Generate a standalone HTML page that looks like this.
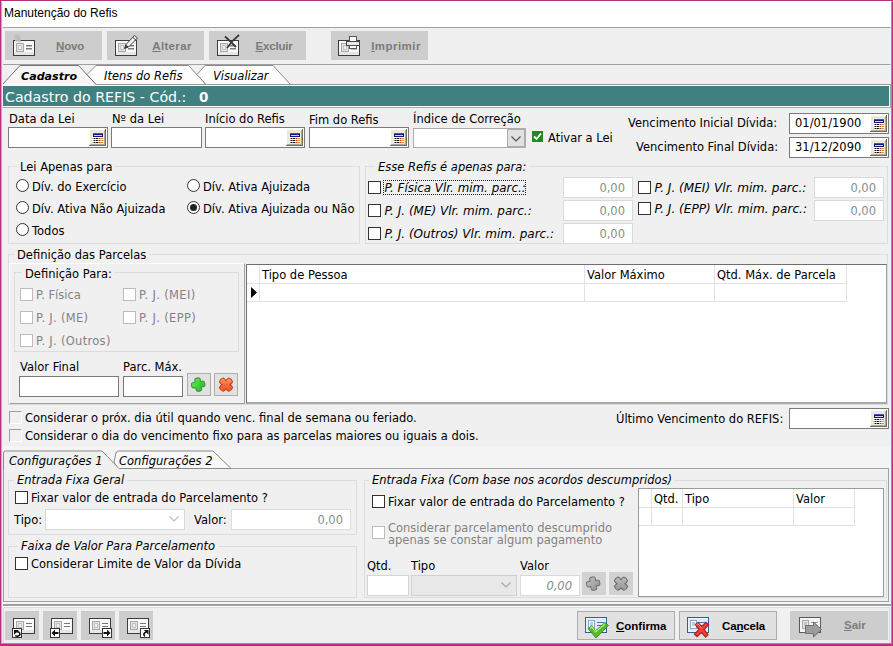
<!DOCTYPE html>
<html lang="pt-BR"><head><meta charset="utf-8"><title>Manutenção do Refis</title><style>
html,body{margin:0;padding:0;background:#fff;}
#w{position:relative;width:893px;height:646px;overflow:hidden;font-family:"DejaVu Sans","Liberation Sans",sans-serif;font-size:11.5px;color:#000;line-height:15px;}
#w div,#w svg.a,#w svg.ic{position:absolute;box-sizing:border-box;}
.t{white-space:nowrap;}
.inp{background:#fff;border:1px solid #7a7a7a;}
.dinp{background:#fff;border:1px solid #d9d9d9;}
.v{position:absolute;left:5px;top:2px;white-space:nowrap;}
.vr{position:absolute;right:7px;top:2.5px;color:#8c8c8c;white-space:nowrap;}
.cb{background:#fff;border:1px solid #333;}
.cb.dis{border-color:#bcbcbc;background:#fff;}
.rb{background:#fff;border:1px solid #333;border-radius:50%;}
.rb i{position:absolute;left:2px;top:2px;width:7px;height:7px;border-radius:50%;background:#222;}
.gb{border:1px solid #dcdcdc;}
.combo{background:#fff;border:1px solid #adadad;}
.cbtn{right:0;top:0;width:18px;height:18px;background:#e1e1e1;border:1px solid #adadad;}
.cbtn svg,.cbtn2 svg{position:absolute;left:2px;top:5px;}
.cbtn2{right:0;top:0;width:18px;height:18px;background:#fff;}
.bl{position:absolute;top:8.5px;font:bold 11.5px "Liberation Sans",sans-serif;color:#7a7a7a;white-space:nowrap;}
.gh{position:absolute;left:2px;top:2.5px;white-space:nowrap;}
</style></head><body><div id="w">
<div class="a" style="left:0px;top:0px;width:893px;height:646px;background:#fff;"></div>
<div class="t" style="left:4px;top:6px;font:12px 'Liberation Sans',sans-serif;color:#000;">Manutenção do Refis</div>
<div class="a" style="left:2px;top:27px;width:889px;height:617px;background:#f0f0f0;"></div>
<div class="a" style="left:2px;top:27px;width:889px;height:38px;background:#f0f0f0;border:1px solid #a0a0a0;border-left-color:#fff;border-right-color:#f0f0f0;"></div>
<div class="a" style="left:5px;top:31px;width:97px;height:29px;background:#cdcdcd;"><svg class="ic" width="30" height="26" viewBox="0 0 30 26" style="left:6px;top:2px"><rect x="2.5" y="7.5" width="21" height="15" fill="#fafafa" stroke="#3c3c3c"/><rect x="3" y="19" width="20" height="3" fill="#e6e6e6"/><rect x="5.5" y="10.5" width="7" height="8" fill="#e4e4e4" stroke="#a8a8a8"/><rect x="7" y="12" width="4" height="5" fill="#c4c4c4"/><rect x="8" y="13" width="2" height="3" fill="#eee"/><rect x="15" y="12" width="6" height="1.5" fill="#7c7c7c"/><rect x="15" y="15" width="6" height="1.5" fill="#7c7c7c"/><path d="M3.5 1 L6 5 L6.5 0.5 L9 5.5 L10.5 9.5 L7 9.5 L4.5 8.5 L2.5 4Z" fill="#c4c4c4" opacity="0.9"/><path d="M4.5 1.5 L7 7 M7 1 L9 6.5" stroke="#b0b0b0" stroke-width="0.8" fill="none"/></svg><span class="bl" style="left:25px;width:80px;text-align:center;letter-spacing:-0.2px"><u>N</u>ovo</span></div>
<div class="a" style="left:107px;top:31px;width:97px;height:29px;background:#cdcdcd;"><svg class="ic" width="30" height="26" viewBox="0 0 30 26" style="left:6px;top:2px"><rect x="2.5" y="7.5" width="21" height="15" fill="#fafafa" stroke="#3c3c3c"/><rect x="3" y="19" width="20" height="3" fill="#e6e6e6"/><rect x="5.5" y="10.5" width="7" height="8" fill="#e4e4e4" stroke="#a8a8a8"/><rect x="7" y="12" width="4" height="5" fill="#c4c4c4"/><rect x="8" y="13" width="2" height="3" fill="#eee"/><rect x="15" y="12" width="6" height="1.5" fill="#7c7c7c"/><rect x="15" y="15" width="6" height="1.5" fill="#7c7c7c"/><path d="M11.5 15.5 L13 11.5 L21.5 2.5 L24.5 5 L15.5 14 Z" fill="#f4f4f4" stroke="#444" stroke-width="1"/><path d="M11.5 15.5 L13 11.5 L15.5 14Z" fill="#333"/><path d="M20 4.5 L23 7" stroke="#444" fill="none"/></svg><span class="bl" style="left:25px;width:80px;text-align:center;letter-spacing:0.35px"><u>A</u>lterar</span></div>
<div class="a" style="left:209px;top:31px;width:97px;height:29px;background:#cdcdcd;"><svg class="ic" width="30" height="26" viewBox="0 0 30 26" style="left:6px;top:2px"><rect x="2.5" y="7.5" width="21" height="15" fill="#fafafa" stroke="#3c3c3c"/><rect x="3" y="19" width="20" height="3" fill="#e6e6e6"/><rect x="5.5" y="10.5" width="7" height="8" fill="#e4e4e4" stroke="#a8a8a8"/><rect x="7" y="12" width="4" height="5" fill="#c4c4c4"/><rect x="8" y="13" width="2" height="3" fill="#eee"/><rect x="15" y="12" width="6" height="1.5" fill="#7c7c7c"/><rect x="15" y="15" width="6" height="1.5" fill="#7c7c7c"/><path d="M10 3.5 L16 9 L21 14 M24 2 L18 7.5 L12 15" stroke="#3a3a3a" stroke-width="1.8" fill="none"/></svg><span class="bl" style="left:25px;width:80px;text-align:center;letter-spacing:-0.2px"><u>E</u>xcluir</span></div>
<div class="a" style="left:331px;top:31px;width:97px;height:29px;background:#cdcdcd;"><svg class="ic" width="30" height="26" viewBox="0 0 30 26" style="left:5px;top:2px"><rect x="2.5" y="7.5" width="21" height="15" fill="#fafafa" stroke="#3c3c3c"/><rect x="3" y="19" width="20" height="3" fill="#e6e6e6"/><rect x="5.5" y="10.5" width="7" height="8" fill="#e4e4e4" stroke="#a8a8a8"/><rect x="7" y="12" width="4" height="5" fill="#c4c4c4"/><rect x="8" y="13" width="2" height="3" fill="#eee"/><rect x="15" y="12" width="6" height="1.5" fill="#7c7c7c"/><rect x="15" y="15" width="6" height="1.5" fill="#7c7c7c"/><rect x="13.5" y="3.5" width="7" height="5" fill="#fff" stroke="#555"/><rect x="10.5" y="8.5" width="13" height="4" fill="#e8e8e8" stroke="#444"/><rect x="13.5" y="12.5" width="7" height="3" fill="#fff" stroke="#555"/></svg><span class="bl" style="left:25px;width:80px;text-align:center;letter-spacing:0.45px"><u>I</u>mprimir</span></div>
<svg class="a" style="left:0;top:64px" width="893" height="24" viewBox="0 0 893 24">
<path d="M87 10.5 L96 1.5 L188.5 1.5 L206 20.5 L96 20.5Z" fill="#fdfdfd" stroke="#8a8a8a" stroke-width="1"/>
<path d="M197 10.5 L205 1.5 L273 1.5 L290.5 20.5 L206 20.5Z" fill="#fdfdfd" stroke="#8a8a8a" stroke-width="1"/>
<path d="M1.5 21.5 L20 1.5 L78.5 1.5 L96 20.5 L96 21.5Z" fill="#f6f6f6" stroke="none"/>
<path d="M1.5 21.5 L20 1.5 L78.5 1.5 L96 20.5" fill="none" stroke="#757575" stroke-width="1"/>
<path d="M96 20.5 L891 20.5" stroke="#9a9a9a" fill="none"/>
</svg>
<div class="t" style="left:21px;top:69px;font-weight:bold;font-style:italic;font-size:11.1px;">Cadastro</div>
<div class="t" style="left:104px;top:69px;font-style:italic;">Itens do Refis</div>
<div class="t" style="left:213px;top:69px;font-style:italic;">Visualizar</div>
<div class="a" style="left:2px;top:85px;width:888px;height:22px;background:#408080;border:1px solid #fff;"></div>
<div class="a" style="left:2px;top:107px;width:889px;height:1px;background:#a8a8a8;"></div>
<div class="a" style="left:890px;top:85px;width:1px;height:23px;background:#a8a8a8;"></div>
<div class="t" style="left:5px;top:88px;color:#fff;font-size:14.2px;line-height:18px;">Cadastro do REFIS - Cód.:</div>
<div class="t" style="left:199px;top:88px;color:#fff;font-size:13.5px;font-weight:bold;line-height:18px;">0</div>
<div class="t" style="left:9px;top:112px;">Data da Lei</div>
<div class="inp" style="left:8px;top:127px;width:100px;height:21px;"><svg width="17" height="17" viewBox="0 0 17 17" style="position:absolute;right:1px;top:1px"><rect width="17" height="17" fill="#ece9d8"/><rect width="16" height="1" fill="#fff"/><rect width="1" height="16" fill="#fff"/><rect x="16" width="1" height="17" fill="#716f64"/><rect y="16" width="17" height="1" fill="#716f64"/><rect x="15" y="1" width="1" height="15" fill="#aca899"/><rect x="1" y="15" width="15" height="1" fill="#aca899"/><rect x="4" y="4" width="10" height="1" fill="#4454c0"/><rect x="4" y="5" width="10" height="3" fill="#16168c"/><rect x="5" y="6" width="8" height="1" fill="#c8d0ff"/><rect x="4" y="8" width="10" height="6" fill="#fff"/><path d="M4.5 9.5h2M7 9.5h2M4.5 11.5h2M7 11.5h2M4.5 13.5h2M7 13.5h2" stroke="#111" stroke-width="1" fill="none"/><path d="M9.5 9.5h2M9.5 11.5h2M9.5 13.5h2" stroke="#b03a20" stroke-width="1" fill="none"/><path d="M12 9.5h2M12 11.5h2M12 13.5h2" stroke="#d89020" stroke-width="1" fill="none"/></svg></div>
<div class="t" style="left:112px;top:112px;">Nº da Lei</div>
<div class="inp" style="left:111px;top:127px;width:91px;height:21px;"></div>
<div class="t" style="left:205px;top:112px;">Início do Refis</div>
<div class="inp" style="left:205px;top:127px;width:100px;height:21px;"><svg width="17" height="17" viewBox="0 0 17 17" style="position:absolute;right:1px;top:1px"><rect width="17" height="17" fill="#ece9d8"/><rect width="16" height="1" fill="#fff"/><rect width="1" height="16" fill="#fff"/><rect x="16" width="1" height="17" fill="#716f64"/><rect y="16" width="17" height="1" fill="#716f64"/><rect x="15" y="1" width="1" height="15" fill="#aca899"/><rect x="1" y="15" width="15" height="1" fill="#aca899"/><rect x="4" y="4" width="10" height="1" fill="#4454c0"/><rect x="4" y="5" width="10" height="3" fill="#16168c"/><rect x="5" y="6" width="8" height="1" fill="#c8d0ff"/><rect x="4" y="8" width="10" height="6" fill="#fff"/><path d="M4.5 9.5h2M7 9.5h2M4.5 11.5h2M7 11.5h2M4.5 13.5h2M7 13.5h2" stroke="#111" stroke-width="1" fill="none"/><path d="M9.5 9.5h2M9.5 11.5h2M9.5 13.5h2" stroke="#b03a20" stroke-width="1" fill="none"/><path d="M12 9.5h2M12 11.5h2M12 13.5h2" stroke="#d89020" stroke-width="1" fill="none"/></svg></div>
<div class="t" style="left:309px;top:113px;">Fim do Refis</div>
<div class="inp" style="left:309px;top:127px;width:100px;height:21px;"><svg width="17" height="17" viewBox="0 0 17 17" style="position:absolute;right:1px;top:1px"><rect width="17" height="17" fill="#ece9d8"/><rect width="16" height="1" fill="#fff"/><rect width="1" height="16" fill="#fff"/><rect x="16" width="1" height="17" fill="#716f64"/><rect y="16" width="17" height="1" fill="#716f64"/><rect x="15" y="1" width="1" height="15" fill="#aca899"/><rect x="1" y="15" width="15" height="1" fill="#aca899"/><rect x="4" y="4" width="10" height="1" fill="#4454c0"/><rect x="4" y="5" width="10" height="3" fill="#16168c"/><rect x="5" y="6" width="8" height="1" fill="#c8d0ff"/><rect x="4" y="8" width="10" height="6" fill="#fff"/><path d="M4.5 9.5h2M7 9.5h2M4.5 11.5h2M7 11.5h2M4.5 13.5h2M7 13.5h2" stroke="#111" stroke-width="1" fill="none"/><path d="M9.5 9.5h2M9.5 11.5h2M9.5 13.5h2" stroke="#b03a20" stroke-width="1" fill="none"/><path d="M12 9.5h2M12 11.5h2M12 13.5h2" stroke="#d89020" stroke-width="1" fill="none"/></svg></div>
<div class="t" style="left:413px;top:112px;">Índice de Correção</div>
<div class="combo" style="left:413px;top:128px;width:113px;height:20px;"><div class="cbtn"><svg width="12" height="8" viewBox="0 0 12 8"><path d="M1.5 1.5 L6 6 L10.5 1.5" fill="none" stroke="#555" stroke-width="1.2"/></svg></div></div>
<div class="a" style="left:532px;top:131px;width:11px;height:11px;background:#1f8b22;"><svg width="11" height="11" viewBox="0 0 11 11" style="position:absolute;left:0;top:0"><path d="M2 5.5 L4.5 8 L9 2.5" fill="none" stroke="#fff" stroke-width="1.8"/></svg></div>
<div class="t" style="left:548px;top:130.5px;">Ativar a Lei</div>
<div class="t" style="left:628px;top:116px;">Vencimento Inicial Dívida:</div>
<div class="inp" style="left:789px;top:113px;width:100px;height:21px;"><span class="v" style="">01/01/1900</span><svg width="17" height="17" viewBox="0 0 17 17" style="position:absolute;right:1px;top:1px"><rect width="17" height="17" fill="#ece9d8"/><rect width="16" height="1" fill="#fff"/><rect width="1" height="16" fill="#fff"/><rect x="16" width="1" height="17" fill="#716f64"/><rect y="16" width="17" height="1" fill="#716f64"/><rect x="15" y="1" width="1" height="15" fill="#aca899"/><rect x="1" y="15" width="15" height="1" fill="#aca899"/><rect x="4" y="4" width="10" height="1" fill="#4454c0"/><rect x="4" y="5" width="10" height="3" fill="#16168c"/><rect x="5" y="6" width="8" height="1" fill="#c8d0ff"/><rect x="4" y="8" width="10" height="6" fill="#fff"/><path d="M4.5 9.5h2M7 9.5h2M4.5 11.5h2M7 11.5h2M4.5 13.5h2M7 13.5h2" stroke="#111" stroke-width="1" fill="none"/><path d="M9.5 9.5h2M9.5 11.5h2M9.5 13.5h2" stroke="#b03a20" stroke-width="1" fill="none"/><path d="M12 9.5h2M12 11.5h2M12 13.5h2" stroke="#d89020" stroke-width="1" fill="none"/></svg></div>
<div class="t" style="left:636px;top:140px;">Vencimento Final Dívida:</div>
<div class="inp" style="left:789px;top:137px;width:100px;height:21px;"><span class="v" style="">31/12/2090</span><svg width="17" height="17" viewBox="0 0 17 17" style="position:absolute;right:1px;top:1px"><rect width="17" height="17" fill="#ece9d8"/><rect width="16" height="1" fill="#fff"/><rect width="1" height="16" fill="#fff"/><rect x="16" width="1" height="17" fill="#716f64"/><rect y="16" width="17" height="1" fill="#716f64"/><rect x="15" y="1" width="1" height="15" fill="#aca899"/><rect x="1" y="15" width="15" height="1" fill="#aca899"/><rect x="4" y="4" width="10" height="1" fill="#4454c0"/><rect x="4" y="5" width="10" height="3" fill="#16168c"/><rect x="5" y="6" width="8" height="1" fill="#c8d0ff"/><rect x="4" y="8" width="10" height="6" fill="#fff"/><path d="M4.5 9.5h2M7 9.5h2M4.5 11.5h2M7 11.5h2M4.5 13.5h2M7 13.5h2" stroke="#111" stroke-width="1" fill="none"/><path d="M9.5 9.5h2M9.5 11.5h2M9.5 13.5h2" stroke="#b03a20" stroke-width="1" fill="none"/><path d="M12 9.5h2M12 11.5h2M12 13.5h2" stroke="#d89020" stroke-width="1" fill="none"/></svg></div>
<div class="gb" style="left:8px;top:166px;width:352px;height:78px;"></div>
<div class="t" style="left:17px;top:160px;background:#f0f0f0;padding:0 3px;">Lei Apenas para</div>
<div class="rb" style="left:16px;top:179px;width:13px;height:13px;"></div>
<div class="t" style="left:32px;top:180px;">Dív. do Exercício</div>
<div class="rb" style="left:187px;top:179px;width:13px;height:13px;"></div>
<div class="t" style="left:203px;top:180px;">Dív. Ativa Ajuizada</div>
<div class="rb" style="left:16px;top:201px;width:13px;height:13px;"></div>
<div class="t" style="left:32px;top:202px;">Dív. Ativa Não Ajuizada</div>
<div class="rb" style="left:187px;top:201px;width:13px;height:13px;"><i></i></div>
<div class="t" style="left:203px;top:202px;">Dív. Ativa Ajuizada ou Não</div>
<div class="rb" style="left:16px;top:223px;width:13px;height:13px;"></div>
<div class="t" style="left:32px;top:224px;">Todos</div>
<div class="gb" style="left:365px;top:166px;width:523px;height:78px;"></div>
<div class="t" style="left:375px;top:160px;background:#f0f0f0;padding:0 3px;font-style:italic;">Esse Refis é apenas para:</div>
<div class="cb" style="left:368px;top:181px;width:13px;height:13px;"></div>
<div class="t" style="left:384.5px;top:181px;font-style:italic;font-size:12px;font-size:11.9px;">P. Física Vlr. mim. parc.:</div>
<div class="a" style="left:383px;top:180px;width:143px;height:15px;border:1px dotted #222;"></div>
<div class="cb" style="left:368px;top:204px;width:13px;height:13px;"></div>
<div class="t" style="left:384.5px;top:204px;font-style:italic;font-size:12px;">P. J. (ME) Vlr. mim. parc.:</div>
<div class="cb" style="left:368px;top:227px;width:13px;height:13px;"></div>
<div class="t" style="left:384.5px;top:227px;font-style:italic;font-size:12px;">P. J. (Outros) Vlr. mim. parc.:</div>
<div class="dinp" style="left:563px;top:177px;width:70px;height:21px;"><span class="vr">0,00</span></div>
<div class="dinp" style="left:563px;top:200px;width:70px;height:21px;"><span class="vr">0,00</span></div>
<div class="dinp" style="left:563px;top:223px;width:70px;height:21px;"><span class="vr">0,00</span></div>
<div class="cb" style="left:638px;top:181px;width:13px;height:13px;"></div>
<div class="t" style="left:654.5px;top:181px;font-style:italic;font-size:12px;font-size:12.1px;">P. J. (MEI) Vlr. mim. parc.:</div>
<div class="cb" style="left:638px;top:202px;width:13px;height:13px;"></div>
<div class="t" style="left:654.5px;top:202px;font-style:italic;font-size:12px;font-size:12.1px;">P. J. (EPP) Vlr. mim. parc.:</div>
<div class="dinp" style="left:814px;top:177px;width:70px;height:21px;"><span class="vr">0,00</span></div>
<div class="dinp" style="left:814px;top:200px;width:70px;height:21px;"><span class="vr">0,00</span></div>
<div class="gb" style="left:8px;top:254px;width:880px;height:151px;"></div>
<div class="t" style="left:14px;top:248px;background:#f0f0f0;padding:0 3px;">Definição das Parcelas</div>
<div class="a" style="left:9px;top:263px;width:236px;height:141px;border-top:1px solid #fff;border-left:1px solid #fff;border-right:1px solid #a0a0a0;border-bottom:1px solid #a0a0a0;"></div>
<div class="gb" style="left:14px;top:272px;width:225px;height:80px;"></div>
<div class="t" style="left:22px;top:266.5px;background:#f0f0f0;padding:0 3px;">Definição Para:</div>
<div class="cb dis" style="left:20px;top:288px;width:13px;height:13px;"></div>
<div class="t" style="left:36px;top:288px;color:#838383;">P. Física</div>
<div class="cb dis" style="left:20px;top:311px;width:13px;height:13px;"></div>
<div class="t" style="left:36px;top:311px;color:#838383;letter-spacing:0.3px;">P. J. (ME)</div>
<div class="cb dis" style="left:20px;top:334px;width:13px;height:13px;"></div>
<div class="t" style="left:36px;top:334px;color:#838383;letter-spacing:0.3px;">P. J. (Outros)</div>
<div class="cb dis" style="left:123px;top:288px;width:13px;height:13px;"></div>
<div class="t" style="left:139px;top:288px;color:#838383;letter-spacing:0.35px;">P. J. (MEI)</div>
<div class="cb dis" style="left:123px;top:311px;width:13px;height:13px;"></div>
<div class="t" style="left:139px;top:311px;color:#838383;letter-spacing:0.35px;">P. J. (EPP)</div>
<div class="t" style="left:20px;top:360px;">Valor Final</div>
<div class="t" style="left:123px;top:360px;">Parc. Máx.</div>
<div class="inp" style="left:19px;top:376px;width:100px;height:21px;"></div>
<div class="inp" style="left:123px;top:376px;width:60px;height:21px;"></div>
<svg class="a" style="left:0;top:0" width="0" height="0"><defs><linearGradient id="gG" x1="0" y1="0" x2="1" y2="1"><stop offset="0" stop-color="#7ae86e"/><stop offset="0.5" stop-color="#44cf3c"/><stop offset="1" stop-color="#2fae2a"/></linearGradient><linearGradient id="gO" x1="0" y1="0" x2="1" y2="1"><stop offset="0" stop-color="#ffc39a"/><stop offset="0.45" stop-color="#f8703a"/><stop offset="1" stop-color="#e04a1c"/></linearGradient><linearGradient id="gS" x1="0" y1="0" x2="1" y2="1"><stop offset="0" stop-color="#c4c4c4"/><stop offset="1" stop-color="#8e8e8e"/></linearGradient></defs></svg>
<div class="a" style="left:187px;top:373px;width:24px;height:23px;background:#e1e1e1;border:1px solid #adadad;"><svg width="22" height="21" viewBox="0 0 22 21" style="position:absolute;left:0;top:0"><g transform="translate(10.2 10.6) scale(0.85) rotate(-8) translate(-10.5 -10.5)"><path d="M7.6 3.2 Q10.5 1.8 13.4 3.2 Q14.2 5.6 13.6 7.4 Q15.8 6.8 17.8 7.6 Q19.2 10.5 17.8 13.4 Q15.4 14.2 13.6 13.6 Q14.2 15.8 13.4 17.8 Q10.5 19.2 7.6 17.8 Q6.8 15.4 7.4 13.6 Q5.2 14.2 3.2 13.4 Q1.8 10.5 3.2 7.6 Q5.6 6.8 7.4 7.4 Q6.8 5.2 7.6 3.2Z" fill="url(#gG)" stroke="#2a9628" stroke-width="1.1"/></g></svg></div>
<div class="a" style="left:214px;top:373px;width:24px;height:23px;background:#e1e1e1;border:1px solid #adadad;"><svg width="22" height="21" viewBox="0 0 22 21" style="position:absolute;left:0;top:0"><g transform="translate(11 10.7) scale(0.92) rotate(45) translate(-10.5 -10.5)"><path d="M7.6 3.2 Q10.5 1.8 13.4 3.2 Q14.2 5.6 13.6 7.4 Q15.8 6.8 17.8 7.6 Q19.2 10.5 17.8 13.4 Q15.4 14.2 13.6 13.6 Q14.2 15.8 13.4 17.8 Q10.5 19.2 7.6 17.8 Q6.8 15.4 7.4 13.6 Q5.2 14.2 3.2 13.4 Q1.8 10.5 3.2 7.6 Q5.6 6.8 7.4 7.4 Q6.8 5.2 7.6 3.2Z" fill="url(#gO)" stroke="#c24418" stroke-width="1.1"/></g></svg></div>
<div class="a" style="left:246px;top:264px;width:641px;height:140px;background:#fff;border:1px solid #6e6e6e;border-right:1px solid #a0a0a0;border-bottom:2px solid #a8a8a8;"></div>
<div class="a" style="left:247px;top:265px;width:13px;height:19px;border-right:1px solid #e2e2e2;border-bottom:1px solid #e2e2e2;"></div>
<div class="a" style="left:247px;top:284px;width:13px;height:18px;border-right:1px solid #e2e2e2;border-bottom:1px solid #e2e2e2;"></div>
<div class="a" style="left:260px;top:265px;width:325px;height:19px;border-right:1px solid #e2e2e2;border-bottom:1px solid #e2e2e2;"><span class="gh">Tipo de Pessoa</span></div>
<div class="a" style="left:260px;top:284px;width:325px;height:18px;border-right:1px solid #e2e2e2;border-bottom:1px solid #e2e2e2;"></div>
<div class="a" style="left:585px;top:265px;width:130px;height:19px;border-right:1px solid #e2e2e2;border-bottom:1px solid #e2e2e2;"><span class="gh">Valor Máximo</span></div>
<div class="a" style="left:585px;top:284px;width:130px;height:18px;border-right:1px solid #e2e2e2;border-bottom:1px solid #e2e2e2;"></div>
<div class="a" style="left:715px;top:265px;width:132px;height:19px;border-right:1px solid #e2e2e2;border-bottom:1px solid #e2e2e2;"><span class="gh">Qtd. Máx. de Parcela</span></div>
<div class="a" style="left:715px;top:284px;width:132px;height:18px;border-right:1px solid #e2e2e2;border-bottom:1px solid #e2e2e2;"></div>
<svg class="a" style="left:251px;top:287px" width="6" height="11"><path d="M0 0 L6 5.5 L0 11Z" fill="#000"/></svg>
<div class="a" style="left:9px;top:411px;width:13px;height:13px;background:#f0f0f0;border:1px solid #fff;border-top-color:#a0a0a0;border-left-color:#a0a0a0;"></div>
<div class="t" style="left:25px;top:411px;">Considerar o próx. dia útil quando venc. final de semana ou feriado.</div>
<div class="a" style="left:9px;top:429px;width:13px;height:13px;background:#f0f0f0;border:1px solid #fff;border-top-color:#a0a0a0;border-left-color:#a0a0a0;"></div>
<div class="t" style="left:25px;top:429px;">Considerar o dia do vencimento fixo para as parcelas maiores ou iguais a dois.</div>
<div class="t" style="left:616px;top:412px;">Último Vencimento do REFIS:</div>
<div class="inp" style="left:789px;top:408px;width:100px;height:21px;"><svg width="17" height="17" viewBox="0 0 17 17" style="position:absolute;right:1px;top:1px"><rect width="17" height="17" fill="#ece9d8"/><rect width="16" height="1" fill="#fff"/><rect width="1" height="16" fill="#fff"/><rect x="16" width="1" height="17" fill="#716f64"/><rect y="16" width="17" height="1" fill="#716f64"/><rect x="15" y="1" width="1" height="15" fill="#aca899"/><rect x="1" y="15" width="15" height="1" fill="#aca899"/><rect x="4" y="4" width="10" height="1" fill="#4454c0"/><rect x="4" y="5" width="10" height="3" fill="#16168c"/><rect x="5" y="6" width="8" height="1" fill="#c8d0ff"/><rect x="4" y="8" width="10" height="6" fill="#fff"/><path d="M4.5 9.5h2M7 9.5h2M4.5 11.5h2M7 11.5h2M4.5 13.5h2M7 13.5h2" stroke="#111" stroke-width="1" fill="none"/><path d="M9.5 9.5h2M9.5 11.5h2M9.5 13.5h2" stroke="#b03a20" stroke-width="1" fill="none"/><path d="M12 9.5h2M12 11.5h2M12 13.5h2" stroke="#d89020" stroke-width="1" fill="none"/></svg></div>
<div class="a" style="left:2px;top:446px;width:889px;height:158px;background:#f4f4f4;"></div>
<div class="a" style="left:3px;top:468px;width:886px;height:134px;background:#f0f0f0;border:1px solid #a0a0a0;"></div>
<svg class="a" style="left:0;top:449px" width="893" height="22" viewBox="0 0 893 22">
<path d="M114 13 L116 4 Q116.5 2 118.5 2 L213 2 L231 19.5 L118 19.5Z" fill="#f8f8f8" stroke="#8a8a8a"/>
<path d="M3.5 21 L3.5 4 Q3.5 2 5.5 2 L102 2 L119 19.5 L119 21Z" fill="#f0f0f0" stroke="none"/>
<path d="M3.5 21 L3.5 4 Q3.5 2 5.5 2 L102 2 L119 19.5" fill="none" stroke="#8a8a8a"/>
</svg>
<div class="t" style="left:9px;top:454px;font-style:italic;">Configurações 1</div>
<div class="t" style="left:119px;top:454px;font-style:italic;">Configurações 2</div>
<div class="gb" style="left:8px;top:480px;width:349px;height:55px;"></div>
<div class="t" style="left:14px;top:473px;background:#f0f0f0;padding:0 3px;font-style:italic;">Entrada Fixa Geral</div>
<div class="cb" style="left:15px;top:491px;width:13px;height:13px;"></div>
<div class="t" style="left:31px;top:491px;">Fixar valor de entrada do Parcelamento ?</div>
<div class="t" style="left:14px;top:512.5px;">Tipo:</div>
<div class="combo" style="left:45px;top:509px;width:140px;height:21px;border-color:#d9d9d9;"><div class="cbtn2"><svg width="12" height="8" viewBox="0 0 12 8"><path d="M1.5 1.5 L6 6 L10.5 1.5" fill="none" stroke="#bcbcbc" stroke-width="1.2"/></svg></div></div>
<div class="t" style="left:194px;top:512.5px;">Valor:</div>
<div class="dinp" style="left:231px;top:509px;width:120px;height:21px;border-color:#dcdcdc;"><span class="vr">0,00</span></div>
<div class="gb" style="left:8px;top:546px;width:349px;height:52px;"></div>
<div class="t" style="left:18px;top:539px;background:#f0f0f0;padding:0 3px;font-style:italic;">Faixa de Valor Para Parcelamento</div>
<div class="cb" style="left:15px;top:557px;width:13px;height:13px;"></div>
<div class="t" style="left:31px;top:557px;">Considerar Limite de Valor da Dívida</div>
<div class="gb" style="left:364px;top:480px;width:523px;height:118px;"></div>
<div class="t" style="left:369px;top:473px;background:#f0f0f0;padding:0 3px;font-style:italic;">Entrada Fixa (Com base nos acordos descumpridos)</div>
<div class="cb" style="left:372px;top:495px;width:13px;height:13px;"></div>
<div class="t" style="left:388px;top:495px;">Fixar valor de entrada do Parcelamento ?</div>
<div class="cb dis" style="left:372px;top:526px;width:13px;height:13px;"></div>
<div class="t" style="left:388px;top:521.5px;color:#838383;line-height:12.2px;">Considerar parcelamento descumprido<br>apenas se constar algum pagamento</div>
<div class="t" style="left:367px;top:559px;">Qtd.</div>
<div class="t" style="left:411px;top:559px;">Tipo</div>
<div class="t" style="left:520px;top:559px;">Valor</div>
<div class="inp" style="left:367px;top:575px;width:42px;height:21px;border-color:#d4d4d4;"></div>
<div class="combo" style="left:411px;top:575px;width:106px;height:21px;background:#e8e8e8;border-color:#d0d0d0;"><div class="cbtn2" style="background:#e8e8e8"><svg width="12" height="8" viewBox="0 0 12 8"><path d="M1.5 1.5 L6 6 L10.5 1.5" fill="none" stroke="#a8a8a8" stroke-width="1.2"/></svg></div></div>
<div class="dinp" style="left:520px;top:575px;width:60px;height:21px;"><span class="vr"><i>0,00</i></span></div>
<div class="a" style="left:582px;top:572px;width:24px;height:23px;background:#d2d2d2;border:1px solid #d2d2d2;"><svg width="22" height="21" viewBox="0 0 22 21" style="position:absolute;left:0;top:0"><g transform="translate(10.2 10.6) scale(0.85) rotate(-8) translate(-10.5 -10.5)"><path d="M7.6 3.2 Q10.5 1.8 13.4 3.2 Q14.2 5.6 13.6 7.4 Q15.8 6.8 17.8 7.6 Q19.2 10.5 17.8 13.4 Q15.4 14.2 13.6 13.6 Q14.2 15.8 13.4 17.8 Q10.5 19.2 7.6 17.8 Q6.8 15.4 7.4 13.6 Q5.2 14.2 3.2 13.4 Q1.8 10.5 3.2 7.6 Q5.6 6.8 7.4 7.4 Q6.8 5.2 7.6 3.2Z" fill="url(#gS)" stroke="#6a6a6a" stroke-width="1.1"/></g></svg></div>
<div class="a" style="left:609px;top:572px;width:24px;height:23px;background:#d2d2d2;border:1px solid #d2d2d2;"><svg width="22" height="21" viewBox="0 0 22 21" style="position:absolute;left:0;top:0"><g transform="translate(11 10.7) scale(0.92) rotate(45) translate(-10.5 -10.5)"><path d="M7.6 3.2 Q10.5 1.8 13.4 3.2 Q14.2 5.6 13.6 7.4 Q15.8 6.8 17.8 7.6 Q19.2 10.5 17.8 13.4 Q15.4 14.2 13.6 13.6 Q14.2 15.8 13.4 17.8 Q10.5 19.2 7.6 17.8 Q6.8 15.4 7.4 13.6 Q5.2 14.2 3.2 13.4 Q1.8 10.5 3.2 7.6 Q5.6 6.8 7.4 7.4 Q6.8 5.2 7.6 3.2Z" fill="url(#gS)" stroke="#6a6a6a" stroke-width="1.1"/></g></svg></div>
<div class="a" style="left:638px;top:488px;width:246px;height:109px;background:#fff;border:1px solid #9a9a9a;"></div>
<div class="a" style="left:639px;top:489px;width:13px;height:19px;border-right:1px solid #e2e2e2;border-bottom:1px solid #e2e2e2;"></div>
<div class="a" style="left:639px;top:508px;width:13px;height:18px;border-right:1px solid #e2e2e2;border-bottom:1px solid #e2e2e2;"></div>
<div class="a" style="left:652px;top:489px;width:31px;height:19px;border-right:1px solid #e2e2e2;border-bottom:1px solid #e2e2e2;"><span class="gh">Qtd.</span></div>
<div class="a" style="left:652px;top:508px;width:31px;height:18px;border-right:1px solid #e2e2e2;border-bottom:1px solid #e2e2e2;"></div>
<div class="a" style="left:683px;top:489px;width:111px;height:19px;border-right:1px solid #e2e2e2;border-bottom:1px solid #e2e2e2;"><span class="gh">Tipo</span></div>
<div class="a" style="left:683px;top:508px;width:111px;height:18px;border-right:1px solid #e2e2e2;border-bottom:1px solid #e2e2e2;"></div>
<div class="a" style="left:794px;top:489px;width:61px;height:19px;border-right:1px solid #e2e2e2;border-bottom:1px solid #e2e2e2;"><span class="gh">Valor</span></div>
<div class="a" style="left:794px;top:508px;width:61px;height:18px;border-right:1px solid #e2e2e2;border-bottom:1px solid #e2e2e2;"></div>
<div class="a" style="left:2px;top:604px;width:889px;height:2px;background:#a0a0a0;"></div>
<div class="a" style="left:2px;top:606px;width:889px;height:1px;background:#fff;"></div>
<div class="a" style="left:3px;top:607px;width:887px;height:37px;border:1px solid #dadada;border-bottom:none;"></div>
<div class="a" style="left:5px;top:611px;width:34px;height:29px;background:#cdcdcd;"><svg class="ic" width="30" height="24" viewBox="0 0 30 24" style="left:7px;top:5px"><rect x="1.5" y="2.5" width="21" height="15" fill="#fafafa" stroke="#3c3c3c"/><rect x="2" y="14" width="20" height="3" fill="#e6e6e6"/><rect x="4.5" y="5.5" width="7" height="8" fill="#e4e4e4" stroke="#a8a8a8"/><rect x="6" y="7" width="4" height="5" fill="#c4c4c4"/><rect x="7" y="8" width="2" height="3" fill="#eee"/><rect x="14" y="7" width="6" height="1" fill="#777"/><rect x="14" y="10" width="6" height="1" fill="#777"/><g transform="translate(0,12)"><rect x="0.5" y="0.5" width="9" height="9" fill="#fff" stroke="#333"/><path d="M2 2 L6.8 2 L2 6.8Z" fill="#111"/><path d="M4 3.8 C7.5 3 9 6 7 7.6 C6 8.4 4.5 8.3 3.2 7.8" fill="none" stroke="#111" stroke-width="1.5"/></g></svg></div>
<div class="a" style="left:43px;top:611px;width:34px;height:29px;background:#cdcdcd;"><svg class="ic" width="30" height="24" viewBox="0 0 30 24" style="left:7px;top:5px"><rect x="1.5" y="2.5" width="21" height="15" fill="#fafafa" stroke="#3c3c3c"/><rect x="2" y="14" width="20" height="3" fill="#e6e6e6"/><rect x="4.5" y="5.5" width="7" height="8" fill="#e4e4e4" stroke="#a8a8a8"/><rect x="6" y="7" width="4" height="5" fill="#c4c4c4"/><rect x="7" y="8" width="2" height="3" fill="#eee"/><rect x="14" y="7" width="6" height="1" fill="#777"/><rect x="14" y="10" width="6" height="1" fill="#777"/><g transform="translate(0,12)"><rect x="0.5" y="0.5" width="9" height="9" fill="#fff" stroke="#333"/><path d="M1.5 5 L5 1.5 L5 4 L8.5 4 L8.5 6 L5 6 L5 8.5Z" fill="#111"/></g></svg></div>
<div class="a" style="left:81px;top:611px;width:34px;height:29px;background:#cdcdcd;"><svg class="ic" width="30" height="24" viewBox="0 0 30 24" style="left:7px;top:5px"><rect x="1.5" y="2.5" width="21" height="15" fill="#fafafa" stroke="#3c3c3c"/><rect x="2" y="14" width="20" height="3" fill="#e6e6e6"/><rect x="4.5" y="5.5" width="7" height="8" fill="#e4e4e4" stroke="#a8a8a8"/><rect x="6" y="7" width="4" height="5" fill="#c4c4c4"/><rect x="7" y="8" width="2" height="3" fill="#eee"/><rect x="14" y="7" width="6" height="1" fill="#777"/><rect x="14" y="10" width="6" height="1" fill="#777"/><g transform="translate(14,12)"><rect x="0.5" y="0.5" width="9" height="9" fill="#fff" stroke="#333"/><path d="M8.5 5 L5 1.5 L5 4 L1.5 4 L1.5 6 L5 6 L5 8.5Z" fill="#111"/></g></svg></div>
<div class="a" style="left:119px;top:611px;width:34px;height:29px;background:#cdcdcd;"><svg class="ic" width="30" height="24" viewBox="0 0 30 24" style="left:7px;top:5px"><rect x="1.5" y="2.5" width="21" height="15" fill="#fafafa" stroke="#3c3c3c"/><rect x="2" y="14" width="20" height="3" fill="#e6e6e6"/><rect x="4.5" y="5.5" width="7" height="8" fill="#e4e4e4" stroke="#a8a8a8"/><rect x="6" y="7" width="4" height="5" fill="#c4c4c4"/><rect x="7" y="8" width="2" height="3" fill="#eee"/><rect x="14" y="7" width="6" height="1" fill="#777"/><rect x="14" y="10" width="6" height="1" fill="#777"/><g transform="translate(14,12)"><rect x="0.5" y="0.5" width="9" height="9" fill="#fff" stroke="#333"/><path d="M3.8 2 L8.5 2 L8.5 6.7Z" fill="#111"/><path d="M6.5 4 C4 4.5 3 6.5 4.8 8.4" fill="none" stroke="#111" stroke-width="1.7"/></g></svg></div>
<div class="a" style="left:577px;top:611px;width:98px;height:29px;background:#e1e1e1;border:1px solid #adadad;"><svg class="ic" width="28" height="24" viewBox="0 0 28 24" style="left:6px;top:4px"><rect x="1.5" y="1.5" width="21" height="15" fill="#eef4fb" stroke="#2f5f96"/><rect x="3" y="3" width="18" height="12" fill="#dfeaf6"/><rect x="4.5" y="4.5" width="6" height="8" fill="#f4f8fc" stroke="#8aa6c6"/><rect x="6" y="6" width="3" height="4" fill="#b9cbe0"/><rect x="13" y="6" width="7" height="1" fill="#4a78b0"/><rect x="13" y="9" width="7" height="1" fill="#4a78b0"/><path d="M4 12.5 L7.8 9.8 L11.5 14.8 L21 6.5 L24.5 9.5 L12 22Z" fill="#55bb2c" stroke="#2f8414" stroke-width="0.8"/><path d="M6 12.3 L7.8 11 L11.5 16 L21 8" fill="none" stroke="#b4ee84" stroke-width="1.2"/></svg><span class="bl" style="left:38px;top:7.5px;letter-spacing:0px;color:#000;"><u>C</u>onfirma</span></div>
<div class="a" style="left:679px;top:611px;width:98px;height:29px;background:#e1e1e1;border:1px solid #adadad;"><svg class="ic" width="28" height="24" viewBox="0 0 28 24" style="left:6px;top:4px"><rect x="1.5" y="1.5" width="21" height="15" fill="#eef4fb" stroke="#2f5f96"/><rect x="3" y="3" width="18" height="12" fill="#dfeaf6"/><rect x="4.5" y="4.5" width="6" height="8" fill="#f4f8fc" stroke="#8aa6c6"/><rect x="6" y="6" width="3" height="4" fill="#b9cbe0"/><rect x="13" y="6" width="7" height="1" fill="#4a78b0"/><rect x="13" y="9" width="7" height="1" fill="#4a78b0"/><path d="M9.5 8.5 L12 6.5 L15.5 10.8 L20 6.5 L22.5 8.8 L18 13.5 L22 18.8 L19.5 21 L15.5 16.3 L11 20.5 L8.5 18.3 L13 13.5Z" fill="#ee4442" stroke="#c02220" stroke-width="1.4" stroke-linejoin="round"/><path d="M10.5 8.8 L12 7.8 L15.5 12" fill="none" stroke="#ffa09a" stroke-width="1"/></svg><span class="bl" style="left:42px;top:7.5px;letter-spacing:-0.15px;color:#000;">Ca<u>n</u>cela</span></div>
<div class="a" style="left:790px;top:611px;width:98px;height:29px;background:#cdcdcd;"><svg class="ic" width="28" height="24" viewBox="0 0 28 24" style="left:8px;top:5px"><rect x="1.5" y="1.5" width="21" height="15" fill="#f4f4f4" stroke="#5a5a5a"/><rect x="4.5" y="4.5" width="6" height="8" fill="#e6e6e6" stroke="#a8a8a8"/><rect x="6" y="6" width="3" height="4" fill="#c4c4c4"/><rect x="13" y="6" width="7" height="1" fill="#999"/><rect x="13" y="9" width="7" height="1" fill="#999"/><path d="M7.5 9.5 L15.5 9.5 L15.5 6 L23.5 13.5 L15.5 21 L15.5 17.5 L7.5 17.5Z" fill="#9c9c9c" stroke="#6e6e6e" stroke-width="1"/></svg><span class="bl" style="left:54px;top:8px;letter-spacing:0px;color:#7d7d7d;"><u>S</u>air</span></div>
<div class="a" style="left:0px;top:0px;width:893px;height:646px;border:1px solid #b5307f;border-bottom-width:2px;pointer-events:none;"></div>
<div class="a" style="left:1px;top:1px;width:891px;height:643px;border:1px solid #dc9cc4;border-top-color:#fff;border-right-color:#cf74ac;border-bottom-color:#cf74ac;pointer-events:none;"></div>
<div class="a" style="left:2px;top:2px;width:1px;height:641px;background:#f8e6f0;pointer-events:none;"></div>
</div></body></html>
